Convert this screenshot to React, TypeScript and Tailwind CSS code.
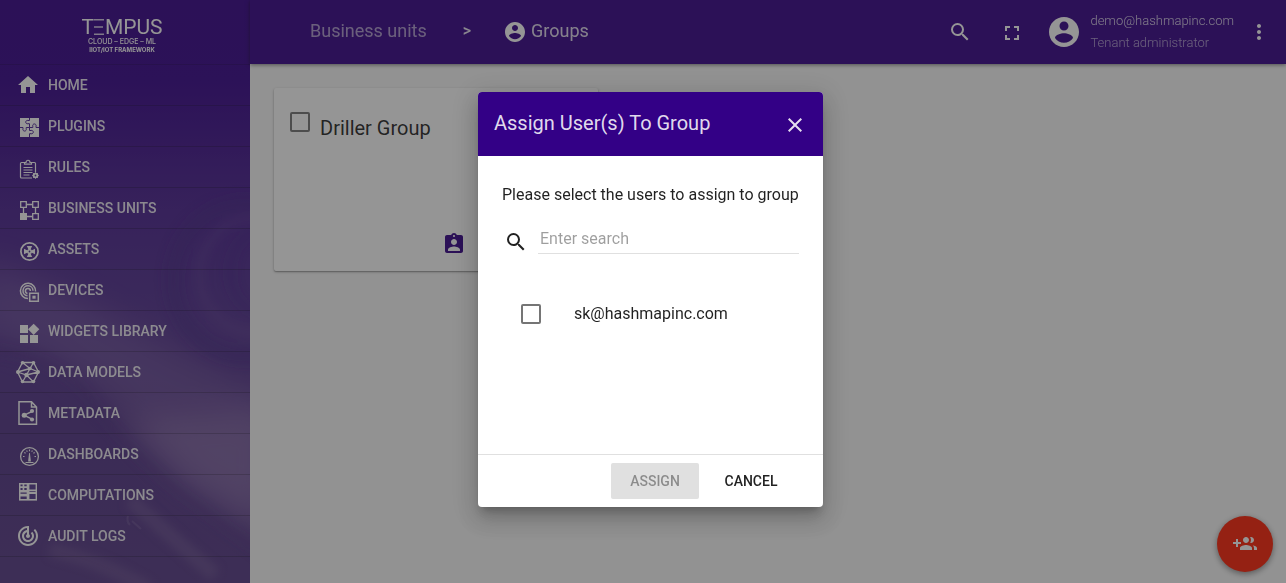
import React from "react";

type IconProps = { size?: string; children: React.ReactNode; className?: string };

function Icon({ size = "size-6", className = "", children }: IconProps) {
  return (
    <svg viewBox="0 0 24 24" fill="currentColor" aria-hidden="true" className={`${size} ${className} block shrink-0 overflow-visible`}>
      {children}
    </svg>
  );
}

const searchPath =
  "M15.5 14h-.79l-.28-.27A6.47 6.47 0 0 0 16 9.5 6.5 6.5 0 1 0 9.5 16c1.61 0 3.09-.59 4.23-1.57l.27.28v.79l5 4.99L20.49 19l-4.99-5zm-6 0C7.01 14 5 11.99 5 9.5S7.01 5 9.5 5 14 7.01 14 9.5 11.99 14 9.5 14z";
const accountPath =
  "M12 2C6.48 2 2 6.48 2 12s4.48 10 10 10 10-4.48 10-10S17.52 2 12 2zm0 3c1.66 0 3 1.34 3 3s-1.34 3-3 3-3-1.34-3-3 1.34-3 3-3zm0 14.2c-2.5 0-4.71-1.28-6-3.22.03-1.99 4-3.08 6-3.08 1.99 0 5.97 1.09 6 3.08-1.29 1.94-3.5 3.22-6 3.22z";

const menu: { label: string; icon: React.ReactNode }[] = [
  { label: "Home", icon: <path d="M10 20v-6h4v6h5v-8h3L12 3 2 12h3v8z" /> },
  {
    label: "Plugins",
    icon: (
      <>
        <rect x="4" y="4" width="19" height="19" />
        <path
          d="M13.500 4v2.500h-1.500a1.700 1.700 0 1 0 0 3.200h1.500v3.800M4 13.500h3v1.300a1.700 1.700 0 1 0 3.200 0v-1.300h3.300M13.500 13.500v3h1.500a1.700 1.700 0 1 1 0 3.200h-1.500V23M13.500 13.500h3.300v-1.300a1.700 1.700 0 1 1 3.200 0v1.300h3"
          fill="none"
          stroke="#4a1f96"
          strokeWidth="1"
        />
      </>
    ),
  },
  {
    label: "Rules",
    icon: (
      <>
        <g fill="none" stroke="currentColor">
          <path d="M8 7.500H5.500a1 1 0 0 0-1 1v13.500a1 1 0 0 0 1 1H16M15.500 7.500H18.500a1 1 0 0 1 1 1V17" strokeWidth="1.200" />
          <path d="M8.500 9.200V7.500h1.500c0-3 4-3 4 0h1.500v1.700z" strokeWidth="1.200" />
          <path d="M7.500 12.500h9M7.500 15h9M7.500 17.500h9M7.500 20h6" strokeWidth="1" />
          <circle cx="19.500" cy="20.500" r="2" strokeWidth="1.600" />
          <path d="M19.500 17.300v6.400M16.300 20.500h6.400M17.200 18.200l4.600 4.600M21.800 18.200l-4.600 4.600" strokeWidth="1" />
        </g>
        <circle cx="19.500" cy="20.500" r=".9" fill="#4a1f96" />
      </>
    ),
  },
  {
    label: "Business units",
    icon: (
      <>
        <g fill="none" stroke="currentColor" strokeWidth="1.300">
          <path d="M4.700 5.700h5.600v5.600H4.700zM16.700 5.700h5.600v5.600h-5.600zM16.700 17.700h5.600v5.600h-5.600z" />
          <path d="M10.500 8.500h6M7.500 11.500v6M19.500 11.500v6M10.500 20.500h6" />
        </g>
        <path d="M4 17h7v7H4z" />
      </>
    ),
  },
  {
    label: "Assets",
    icon: (
      <>
        <circle cx="13.500" cy="14.500" r="8.600" fill="none" stroke="currentColor" strokeWidth="1.700" />
        <path d="M13.500 9v11M8 14.500h11" stroke="currentColor" strokeWidth="2" />
        <path d="M10.800 9h5.400l-1.500 3h-2.400zM10.800 20h5.400l-1.500-3h-2.400zM8 11.800v5.400l3-1.500v-2.400zM19 11.800v5.400l-3-1.500v-2.400z" />
        <circle cx="13.500" cy="14.500" r="2.500" />
        <circle cx="13.500" cy="14.500" r=".9" fill="#4a2a92" />
      </>
    ),
  },
  {
    label: "Devices",
    icon: (
      <>
        <g fill="none" stroke="currentColor" strokeWidth="1.500">
          <path d="M12 20.500A7.600 7.600 0 1 1 19.600 13.500" />
          <path d="M11.500 17.800A5 5 0 1 1 17 12.800" />
          <path d="M11.500 15.400A2.500 2.500 0 1 1 14.400 13" />
          <path d="M13.700 15.200h8.600v8.100h-8.600z" />
        </g>
        <rect x="16.400" y="17.700" width="3.200" height="3" />
      </>
    ),
  },
  {
    label: "Widgets library",
    icon: (
      <path d="M14 16v8h8v-8h-8zM4 24h8v-8H4v8zM4 6v8h8V6H4zm13.660-1.310L12 10.340 17.660 16l5.660-5.660-5.660-5.650z" />
    ),
  },
  {
    label: "Data Models",
    icon: (
      <>
        <path
          d="M6.500 2.500h11l5 9.500-5 10h-11L1.500 12zM1.500 12l12.500-3.500M1.500 12l9 3 12-3M6.500 2.500L14 8.500l3.500-6M10.500 15L14 8.500M6.500 22l4-7 7 7M14 8.500l8.500 3.500"
          fill="none"
          stroke="currentColor"
          strokeWidth="1.300"
        />
        <circle cx="6.500" cy="2.700" r="1.800" />
        <circle cx="17.500" cy="2.700" r="1.800" />
        <circle cx="22" cy="12" r="2" />
        <circle cx="17.500" cy="21.500" r="1.800" />
        <circle cx="6.500" cy="21.500" r="1.800" />
        <circle cx="2" cy="12" r="2" />
        <circle cx="10.500" cy="15" r="2.200" />
        <circle cx="14" cy="8.500" r="1.800" />
      </>
    ),
  },
  {
    label: "Metadata",
    icon: (
      <>
        <path d="M3 .7h12.500L20.500 6v17.300H3zM15.500 .7V6h5" fill="none" stroke="currentColor" strokeWidth="1.500" />
        <path d="M16 10.500l-8 3.700 8 4" fill="none" stroke="currentColor" strokeWidth="1.400" />
        <circle cx="16" cy="10" r="2.100" />
        <circle cx="8.200" cy="14.200" r="2.500" />
        <circle cx="16" cy="18.500" r="2.100" />
      </>
    ),
  },
  {
    label: "Dashboards",
    icon: (
      <>
        <circle cx="13.500" cy="14.500" r="8.900" fill="none" stroke="currentColor" strokeWidth="1.300" />
        <path
          d="M7 14.500h1.500M18.500 14.500H20M8.300 10.500l1.300.8M18.700 10.500l-1.300.8M10.600 8.500l.7 1.300M16.400 8.500l-.7 1.300M13.500 7.500v1.800M9.500 20.500h8"
          stroke="currentColor"
          strokeWidth="1.100"
        />
        <path d="M13.100 11h.8l1 8.500h-2.800z" />
      </>
    ),
  },
  {
    label: "Computations",
    icon: (
      <>
        <path d="M3 0h18v17.600H3z" />
        <path
          d="M4.500 1.400h2.100v1.800H4.500zM8.300 1.400h2.400v1.800H8.300zM4.500 5h2.100v2H4.500zM8.300 5h2.400v2H8.300zM4.500 9.400h6.200v1.400H4.500zM4.500 13.400h6.200v2.600H4.500zM13.400 1.400h6.200v5.200h-6.200zM13.400 8.200h6.200v.9h-6.200zM13.400 11h6.200v5.100h-6.200z"
          fill="#553a90"
        />
      </>
    ),
  },
  {
    label: "Audit Logs",
    icon: (
      <path d="M19.070 4.930l-1.410 1.410A8.014 8.014 0 0 1 20 12c0 4.420-3.580 8-8 8s-8-3.580-8-8c0-4.080 3.050-7.440 7-7.930v2.020C8.160 6.570 6 9.030 6 12c0 3.310 2.690 6 6 6s6-2.690 6-6c0-1.660-.67-3.160-1.760-4.240l-1.410 1.410C15.550 9.900 16 10.900 16 12c0 2.210-1.790 4-4 4s-4-1.790-4-4c0-1.860 1.280-3.410 3-3.860v2.140c-.6.350-1 .980-1 1.720 0 1.100.9 2 2 2s2-.9 2-2c0-.74-.4-1.380-1-1.720V2h-1C6.480 2 2 6.480 2 12s4.480 10 10 10 10-4.480 10-10c0-2.760-1.120-5.260-2.930-7.070z" />
    ),
  },
];

function SidebarBackdrop() {
  return (
    <svg
      viewBox="0 0 250 583"
      preserveAspectRatio="xMidYMid slice"
      aria-hidden="true"
      className="absolute inset-0 h-full w-full"
    >
      <defs>
        <linearGradient id="base" x1="0" y1="0" x2="0" y2="1">
          <stop offset="0" stopColor="#360289" />
          <stop offset=".14" stopColor="#37048a" />
          <stop offset=".36" stopColor="#4b2390" />
          <stop offset=".56" stopColor="#553490" />
          <stop offset=".72" stopColor="#533487" />
          <stop offset="1" stopColor="#573b86" />
        </linearGradient>
        <filter id="soft" x="-40%" y="-40%" width="180%" height="180%">
          <feGaussianBlur stdDeviation="16" />
        </filter>
        <filter id="fine" x="-40%" y="-40%" width="180%" height="180%">
          <feGaussianBlur stdDeviation="5" />
        </filter>
      </defs>
      <rect width="250" height="583" fill="url(#base)" />
      <path d="M-20 260L60 290 170 350 280 400V520L190 480 100 390 40 350-20 330z" fill="#8468a8" opacity=".42" filter="url(#soft)" />
      <path d="M120 420L270 410V540L190 490z" fill="#a086b8" opacity=".4" filter="url(#soft)" />
      <g fill="none" filter="url(#fine)">
        <ellipse cx="245" cy="280" rx="72" ry="76" stroke="#432384" strokeWidth="18" opacity=".4" />
        <ellipse cx="256" cy="275" rx="56" ry="58" stroke="#7450a0" strokeWidth="6" opacity=".3" />
        <ellipse cx="264" cy="272" rx="34" ry="42" stroke="#45288a" strokeWidth="8" opacity=".4" />
        <path d="M-10 350Q60 355 95 405T190 500T270 560" stroke="#452a7c" strokeWidth="10" opacity=".25" />
        <path d="M130 500L215 575" stroke="#8a6ca6" strokeWidth="14" opacity=".35" />
        <path d="M50 550Q100 560 150 590" stroke="#8a6ca6" strokeWidth="14" opacity=".3" />
      </g>
      <path d="M128 516q-2 5 2 9M132 521l9 8" stroke="#a58cc0" strokeWidth="2" opacity=".22" fill="none" />
    </svg>
  );
}

function Sidebar() {
  return (
    <aside className="relative w-[250px] shrink-0 overflow-hidden bg-[#360289]">
      <SidebarBackdrop />
      <div className="relative flex h-full flex-col">
        <div className="flex h-[65px] flex-col items-center border-b border-black/15 pt-[17px] pr-1.5 text-white">
          <div aria-label="TEMPUS" className="flex h-5 items-center text-[21px] leading-5">
            <span>T</span>
            <svg viewBox="0 0 10 16" aria-hidden="true" className="mr-px h-4 w-[10px]">
              <path d="M0 .8h10M0 8h9M0 15.200h10" stroke="currentColor" strokeWidth="1.600" opacity=".8" />
            </svg>
            <span>MPUS</span>
          </div>
          <div className="mt-px font-[Inter] text-[7px] leading-[8px] font-medium">CLOUD – EDGE – ML</div>
          <div className="font-[Inter] text-[6px] leading-[7px] font-bold">IIOT/IOT FRAMEWORK</div>
        </div>
        <nav>
          <ul>
            {menu.map((item) => (
              <li key={item.label} className="h-[41px] border-b border-black/20">
                <a href="#" className="flex h-10 items-center gap-2 px-4 text-sm font-medium text-white/90 uppercase">
                  <Icon className="text-white">{item.icon}</Icon>
                  {item.label}
                </a>
              </li>
            ))}
          </ul>
        </nav>
      </div>
    </aside>
  );
}

function Header() {
  return (
    <header className="relative flex h-16 items-center justify-between bg-[#360289] pr-[15px] pl-[60px] text-white shadow-[0_1px_4px_rgba(0,0,0,0.5)]">
      <nav aria-label="Breadcrumb" className="flex items-center text-lg">
        <a href="#" className="pb-0.5 text-white/60">Business units</a>
        <span className="mx-9 pb-0.5 text-base font-medium text-white/90">&gt;</span>
        <a href="#" className="flex items-center gap-1 text-white/85">
          <Icon className="-ml-1 text-white"><path d={accountPath} /></Icon>
          <span className="pb-0.5">Groups</span>
        </a>
      </nav>
      <div className="flex items-center">
        <button type="button" aria-label="Search" className="mr-7">
          <Icon><path d={searchPath} /></Icon>
        </button>
        <button type="button" aria-label="Fullscreen" className="mr-[22px] pt-0.5">
          <Icon><path d="M7 14H5v5h5v-2H7v-3zm-2-4h2V7h3V5H5v5zm12 7h-3v2h5v-5h-2v3zM14 5v2h3v3h2V5h-5z" /></Icon>
        </button>
        <Icon size="size-9"><path d={accountPath} /></Icon>
        <div className="mr-[13px] ml-2 text-[13px] leading-[22px] font-light">
          <div className="text-white/80">demo@hashmapinc.com</div>
          <div className="text-white/60">Tenant administrator</div>
        </div>
        <button type="button" aria-label="More options">
          <Icon><path d="M12 8c1.100 0 2-.9 2-2s-.9-2-2-2-2 .9-2 2 .9 2 2 2zm0 2c-1.100 0-2 .9-2 2s.9 2 2 2 2-.9 2-2-.9-2-2-2zm0 6c-1.100 0-2 .9-2 2s.9 2 2 2 2-.9 2-2-.9-2-2-2z" /></Icon>
        </button>
      </div>
    </header>
  );
}

function Checkbox({ id }: { id: string }) {
  return (
    <input
      id={id}
      type="checkbox"
      className="size-5 shrink-0 appearance-none rounded-xs border-2 border-black/54 checked:bg-[#330086]"
    />
  );
}

function GroupCard() {
  return (
    <article className="flex h-[183px] w-[324px] flex-col justify-between rounded-xs bg-white px-4 pt-6 pb-[15px] shadow-[0_1px_3px_rgba(0,0,0,0.3),0_1px_1px_rgba(0,0,0,0.2)]">
      <div className="flex items-start gap-2.5">
        <Checkbox id="driller" />
        <label htmlFor="driller" className="pt-0.5 text-xl text-black/87">Driller Group</label>
      </div>
      <button type="button" aria-label="Manage users" className="mr-[116px] self-end text-[#360289]">
        <Icon>
          <path d="M19 3h-4.180C14.400 1.840 13.300 1 12 1s-2.400.84-2.820 2H5c-1.100 0-2 .9-2 2v14c0 1.100.9 2 2 2h14c1.100 0 2-.9 2-2V5c0-1.100-.9-2-2-2zm-7 0c.55 0 1 .45 1 1s-.45 1-1 1-1-.45-1-1 .45-1 1-1zm0 4c1.660 0 3 1.340 3 3s-1.340 3-3 3-3-1.340-3-3 1.340-3 3-3zm6 12H6v-1.400c0-2 4-3.100 6-3.100s6 1.100 6 3.100V19z" />
        </Icon>
      </button>
    </article>
  );
}

function AssignDialog() {
  return (
    <section
      role="dialog"
      aria-labelledby="assign-title"
      className="flex w-[345px] flex-col overflow-hidden rounded bg-white text-black/87 shadow-[0_7px_8px_-4px_rgba(0,0,0,0.2),0_13px_19px_2px_rgba(0,0,0,0.14),0_5px_24px_4px_rgba(0,0,0,0.12)]"
    >
      <header className="flex h-16 items-center justify-between bg-[#330086] px-4 text-white/87">
        <h2 id="assign-title" className="pb-0.5 text-xl">Assign User(s) To Group</h2>
        <button type="button" aria-label="Close" className="pt-0.5">
          <Icon>
            <path d="M19 6.410L17.590 5 12 10.590 6.410 5 5 6.410 10.590 12 5 17.590 6.410 19 12 13.410 17.590 19 19 17.590 13.410 12z" />
          </Icon>
        </button>
      </header>
      <div className="h-[298px] px-6 pt-[27px]">
        <p className="text-base whitespace-nowrap">Please select the users to assign to group</p>
        <div className="mt-[17px] flex items-end">
          <label htmlFor="user-search" aria-label="Search users" className="mr-2.5 ml-0.5">
            <Icon><path d={searchPath} /></Icon>
          </label>
          <input
            id="user-search"
            type="text"
            placeholder="Enter search"
            className="h-[30px] min-w-0 flex-1 border-b border-black/12 px-0.5 text-base outline-none placeholder:text-black/38"
          />
        </div>
        <div className="mt-12 flex items-center gap-[33px] pl-[19px]">
          <Checkbox id="user-sk" />
          <label htmlFor="user-sk" className="text-base">sk@hashmapinc.com</label>
        </div>
      </div>
      <footer className="flex h-[53px] items-center justify-end gap-2 border-t border-black/12 pr-7 text-sm font-medium">
        <button type="button" disabled className="h-9 w-[88px] rounded-xs bg-[#e0e0e0] text-black/38">ASSIGN</button>
        <button type="button" className="h-9 w-[88px] rounded-xs">CANCEL</button>
      </footer>
    </section>
  );
}

export default function App() {
  return (
    <div className="flex min-h-screen bg-[#fafafa] font-[Roboto,sans-serif]">
      <Sidebar />
      <div className="flex min-w-0 flex-1 flex-col">
        <Header />
        <main className="flex-1 p-6">
          <GroupCard />
        </main>
      </div>
      <button
        type="button"
        aria-label="Add user group"
        className="fixed right-[13px] bottom-[11px] flex size-14 items-center justify-center rounded-full bg-[#ff2106] text-white shadow-[0_2px_6px_rgba(0,0,0,0.45)]"
      >
        <Icon>
          <path d="M8 10H5V7H3v3H0v2h3v3h2v-3h3v-2zm10 1c1.660 0 2.990-1.340 2.990-3S19.660 5 18 5c-.32 0-.63.050-.91.140.57.810.9 1.790.9 2.860s-.34 2.040-.9 2.860c.28.090.59.140.91.140zm-5 0c1.660 0 2.990-1.340 2.990-3S14.660 5 13 5c-1.660 0-3 1.340-3 3s1.340 3 3 3zm6.620 2.160c.83.730 1.380 1.660 1.380 2.840v2h3v-2c0-1.540-2.370-2.490-4.380-2.840zM13 13c-2 0-6 1-6 3v2h12v-2c0-2-4-3-6-3z" />
        </Icon>
      </button>
      <div className="fixed inset-0 flex items-center justify-center bg-[#212121]/48 pt-4 pl-[15px]">
        <AssignDialog />
      </div>
    </div>
  );
}
